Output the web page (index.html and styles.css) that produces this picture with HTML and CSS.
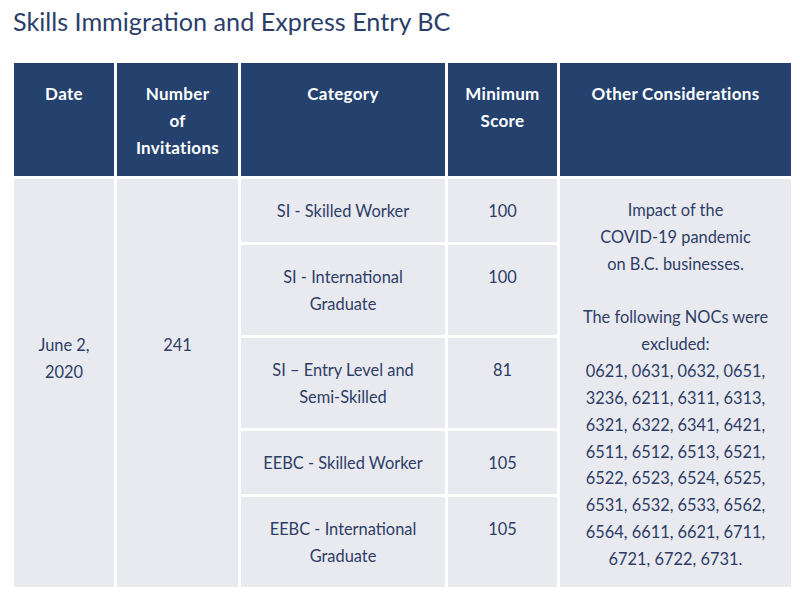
FILE: index.html
```html
<!DOCTYPE html>
<html>
<head>
<meta charset="utf-8">
<link rel="stylesheet" href="styles.css">
</head>
<body>
<h1 class="title">Skills Immigration and Express Entry BC</h1>
<table class="draws">
  <colgroup>
    <col class="c-date"><col class="c-num"><col class="c-cat"><col class="c-score"><col class="c-other">
  </colgroup>
  <thead>
    <tr>
      <th>Date</th>
      <th>Number<br>of<br>Invitations</th>
      <th>Category</th>
      <th>Minimum<br>Score</th>
      <th>Other Considerations</th>
    </tr>
  </thead>
  <tbody>
    <tr>
      <td rowspan="5" class="low">June 2,<br>2020</td>
      <td rowspan="5" class="low">241</td>
      <td>SI - Skilled Worker</td>
      <td>100</td>
      <td rowspan="5" class="other">Impact of the<br>COVID-19 pandemic<br>on B.C. businesses.<br><br>The following NOCs were<br>excluded:<br>0621, 0631, 0632, 0651,<br>3236, 6211, 6311, 6313,<br>6321, 6322, 6341, 6421,<br>6511, 6512, 6513, 6521,<br>6522, 6523, 6524, 6525,<br>6531, 6532, 6533, 6562,<br>6564, 6611, 6621, 6711,<br>6721, 6722, 6731.</td>
    </tr>
    <tr>
      <td>SI - International<br>Graduate</td>
      <td>100</td>
    </tr>
    <tr>
      <td>SI – Entry Level and<br>Semi-Skilled</td>
      <td>81</td>
    </tr>
    <tr>
      <td>EEBC - Skilled Worker</td>
      <td>105</td>
    </tr>
    <tr>
      <td>EEBC - International<br>Graduate</td>
      <td>105</td>
    </tr>
  </tbody>
</table>
</body>
</html>
```

FILE: styles.css
```css
html, body {
  margin: 0;
  padding: 0;
  background: #ffffff;
}
body {
  font-family: Lato, "Open Sans", sans-serif;
  color: #2d3d66;
  padding: 0 0 0 11px;
}
.title {
  margin: 0;
  padding: 5px 0 0 2px;
  height: 60px;
  box-sizing: border-box;
  font-size: 25.2px;
  font-weight: 400;
  line-height: 32px;
  color: #2b3e6b;
}
.draws {
  border-collapse: separate;
  border-spacing: 3px;
  table-layout: fixed;
  width: 783px;
  font-size: 16.4px;
  line-height: 27px;
}
.c-date { width: 100px; }
.c-num { width: 121px; }
.c-cat { width: 204px; }
.c-score { width: 109px; }
.c-other { width: 231px; }
.draws th {
  background: #25426f;
  color: #ffffff;
  font-size: 17px;
  font-weight: 700;
  letter-spacing: 0.3px;
  text-align: center;
  vertical-align: top;
  padding: 17px 2px 15px;
}
.draws td {
  background: #e9eaf0;
  color: #2d3d66;
  text-align: center;
  vertical-align: top;
  padding: 18px 4px;
}
.draws td.low {
  padding-top: 152px;
}
.draws td.other {
  padding-bottom: 0;
  line-height: 26.85px;
}
```
